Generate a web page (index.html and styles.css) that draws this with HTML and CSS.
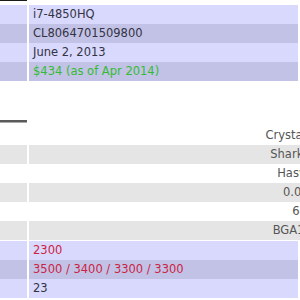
FILE: index.html
```html
<!DOCTYPE html>
<html>
<head>
<meta charset="utf-8">
<link rel="stylesheet" href="styles.css">
</head>
<body>
<div class="page">
  <div class="top-edge"></div>
  <div class="spec">
    <div class="row lav"><div class="label"></div><div class="val">i7-4850HQ</div></div>
    <div class="row lav-dark"><div class="label"></div><div class="val">CL8064701509800</div></div>
    <div class="row lav"><div class="label"></div><div class="val">June 2, 2013</div></div>
    <div class="row lav-dark"><div class="label"></div><div class="val green">$434 (as of Apr 2014)</div></div>
  </div>
  <div class="section-head"></div>
  <div class="compare">
    <div class="row plain"><div class="label"></div><div class="val center">Crystal Well</div></div>
    <div class="row grey"><div class="label"></div><div class="val center">Shark Bay</div></div>
    <div class="row plain"><div class="label"></div><div class="val center">Haswell</div></div>
    <div class="row grey"><div class="label"></div><div class="val center">0.022</div></div>
    <div class="row plain"><div class="label"></div><div class="val center">64</div></div>
    <div class="row grey"><div class="label"></div><div class="val center">BGA1364</div></div>
  </div>
  <div class="spec">
    <div class="row lav"><div class="label"></div><div class="val red">2300</div></div>
    <div class="row lav-dark"><div class="label"></div><div class="val red">3500 / 3400 / 3300 / 3300</div></div>
    <div class="row lav"><div class="label"></div><div class="val">23</div></div>
  </div>
</div>
</body>
</html>
```

FILE: styles.css
```css
html, body {
  margin: 0;
  padding: 0;
  background: #ffffff;
}
body {
  width: 300px;
  height: 300px;
  overflow: hidden;
  font-family: "DejaVu Sans", Verdana, sans-serif;
  font-size: 11.5px;
  line-height: 13px;
  color: #333344;
}
.page {
  display: flex;
  flex-direction: column;
}
.top-edge {
  width: 27px;
  height: 1px;
  background: #1a1a1a;
}
.spec {
  margin-top: 4px;
  display: flex;
  flex-direction: column;
}
.section-head + .compare {
  margin-top: 4px;
}
.compare + .spec {
  margin-top: 1px;
}
.row {
  display: grid;
  column-gap: 2px;
  height: 19px;
}
.spec .row {
  grid-template-columns: 27px 269px;
}
.compare .row {
  grid-template-columns: 27px 541px;
}
.val {
  padding: 3px 4px;
  white-space: nowrap;
}
.lav .label, .lav .val {
  background: #d9d9fd;
}
.lav-dark .label, .lav-dark .val {
  background: #c2c2e6;
}
.grey .label, .grey .val {
  background: #e5e5e5;
}
.plain .label, .plain .val {
  background: #ffffff;
}
.center {
  text-align: center;
  color: #555555;
}
.green {
  color: #33bb33;
}
.red {
  color: #cc2244;
}
.section-head {
  margin-top: 39px;
  width: 27px;
  height: 2px;
  background: #5a5a5a;
  box-shadow: 0 1px 0 #aaaaaa;
}
```
